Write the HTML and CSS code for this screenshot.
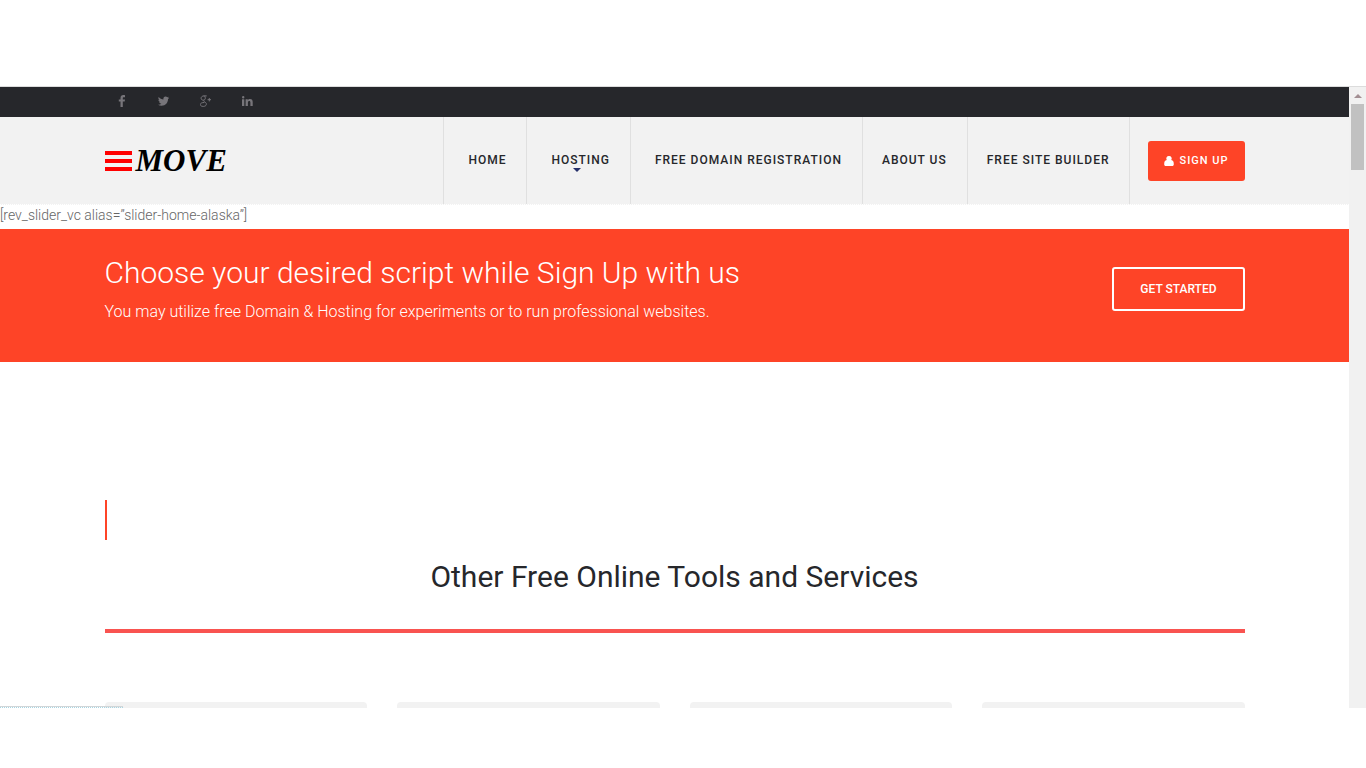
FILE: index.html
```
<!DOCTYPE html>
<html lang="en">
<head>
  <meta charset="UTF-8" />
  <meta name="viewport" content="width=device-width, initial-scale=1.0"/>
  <title>Move - Free Hosting</title>
  <link rel="stylesheet" href="styles.css">
</head>
<body>

<div class="window">
  <div class="page">
    <div class="topbar">
      <div class="container social">
        <a href="#" aria-label="Facebook"><svg width="12" height="12" viewBox="0 0 12 12"><path d="M9 .2v2H7.800c-.8 0-1 .4-1 1v1.200H9l-.3 2.100H6.800V12H4.500V6.500H2.800V4.400h1.700V2.900C4.500 1.100 5.600 0 7.300 0 8.100 0 8.800.1 9 .2z"/></svg></a>
        <a href="#" aria-label="Twitter"><svg width="12" height="12" viewBox="0 0 12 12"><path d="M11.200 2.700c-.3.500-.7.900-1.200 1.200v.3c0 3-2.300 6.500-6.500 6.500-1.300 0-2.500-.4-3.500-1 1.200.1 2.400-.2 3.400-1-1 0-1.900-.7-2.200-1.600h1C1.100 6.900.4 6 .4 4.800c.3.200.6.300 1 .3C.4 4.300.1 3 .7 2c1.200 1.400 2.800 2.300 4.700 2.400-.3-1.800.8-2.900 2.200-2.900.7 0 1.300.3 1.700.7.500-.1 1-.3 1.500-.5-.2.500-.5.900-1 1.300.5-.1.900-.2 1.400-.3z"/></svg></a>
        <a href="#" aria-label="Google Plus"><svg width="12" height="12" viewBox="0 0 12 12"><path class="line" d="M6.700.9H4C2.200.9 1.100 2 1.100 3.200s1 2 2.100 2c1.300 0 2.100-.9 2.100-2C5.300 2 4.700.9 3.800.9M3.800 5.300c-.6.800.4 1.200 1.200 1.800 1 .7 1.500 1.300 1.300 2.400-.2 1.200-1.400 1.900-3 1.900-1.700 0-3-.7-3-1.800 0-1.500 1.900-2.100 4-2.100M9.300 3v3.400M7.600 4.700H11"/></svg></a>
        <a href="#" aria-label="LinkedIn"><svg width="12" height="12" viewBox="0 0 12 12"><path d="M0 4.300h2.300V11H0zM1.200 1a1.200 1.200 0 1 1 0 2.400A1.200 1.200 0 0 1 1.200 1zM3.600 4.300h2.200v1c.4-.7 1.100-1.200 2.200-1.200 1.900 0 2.700 1.100 2.700 3V11H8.400V7.500C8.400 6.600 8.100 6 7.300 6s-1.400.6-1.400 1.500V11H3.600z"/></svg></a>
      </div>
    </div>

    <header class="header">
      <div class="container header-row">
        <a href="#" class="logo">
          <svg width="27" height="20" viewBox="0 0 27 20" aria-hidden="true"><path d="M0 0h27v4H0zM0 8h27v4H0zM0 16h27v4H0z"/></svg>
          <span>MOVE</span>
        </a>
        <nav class="menu">
          <a href="#">HOME</a>
          <a href="#" class="has-sub">HOSTING</a>
          <a href="#">FREE DOMAIN REGISTRATION</a>
          <a href="#" class="tight">ABOUT US</a>
          <a href="#" class="tight">FREE SITE BUILDER</a>
        </nav>
        <a href="#" class="signup">
          <svg width="10" height="10" viewBox="0 0 10 10" aria-hidden="true"><path d="M5 0a2.600 2.600 0 0 1 2.200 4.100C9.200 4.400 9.800 6 9.800 8.200 9.800 9.300 9.200 10 8.200 10H1.800C.8 10 .2 9.300.2 8.200.2 6 .8 4.400 2.800 4.100A2.600 2.600 0 0 1 5 0z"/></svg>
          <span>SIGN UP</span>
        </a>
      </div>
    </header>

    <p class="shortcode">[rev_slider_vc alias=”slider-home-alaska”]</p>

    <section class="promo">
      <div class="container promo-row">
        <div>
          <h2>Choose your desired script while Sign Up with us</h2>
          <p>You may utilize free Domain &amp; Hosting for experiments or to run professional websites.</p>
        </div>
        <a href="#" class="get-started">GET STARTED</a>
      </div>
    </section>

    <section class="tools container">
      <div class="marker"></div>
      <h2>Other Free Online Tools and Services</h2>
      <hr>
      <div class="cards">
        <div class="card"></div>
        <div class="card"></div>
        <div class="card"></div>
        <div class="card"></div>
      </div>
    </section>
  </div>

  <div class="scrollbar">
    <span class="arrow"></span>
    <span class="thumb"></span>
  </div>
  <div class="status"></div>
</div>

</body>
</html>
```
FILE: styles.css
```
* {
  box-sizing: border-box;
}

body {
  margin: 0;
  padding: 86px 0 60px;
  height: 100vh;
  background: #fff;
  color: #26272b;
  font-family: Roboto, sans-serif;
}

a {
  color: inherit;
  text-decoration: none;
}

svg {
  display: block;
  fill: currentColor;
}

h2, p {
  margin: 0;
}

/* browser window */
.window {
  position: relative;
  display: flex;
  height: 100%;
  overflow: hidden;
  border-top: 1px solid #dcdcdc;
}

.page {
  flex: 1;
  min-width: 0;
}

.container {
  width: 100%;
  max-width: 1140px;
  margin: 0 auto;
}

.topbar {
  background: #26272b;
  color: #77757a;
}

.social {
  display: flex;
  align-items: center;
  gap: 30px;
  height: 30px;
  padding: 0 11px 3px;
}

.social .line {
  fill: none;
  stroke: currentColor;
}

.header {
  background: #f2f2f2;
  border-bottom: 1px dotted #fff;
}

.header-row {
  display: flex;
  height: 87px;
}

.logo {
  display: flex;
  align-items: center;
  gap: 4px;
  margin-right: auto;
  color: #000;
  font: italic bold 31px "Liberation Serif", serif;
}

.logo svg {
  fill: #f00;
}

.menu {
  display: flex;
  border-right: 1px solid #e0e0e0;
  font-size: 12px;
  font-weight: 500;
  letter-spacing: 1px;
}

.menu a {
  position: relative;
  display: flex;
  align-items: center;
  padding: 0 20px 2px 24px;
  border-left: 1px solid #e0e0e0;
}

.menu a.tight {
  padding-left: 19px;
}

.has-sub::after {
  content: "";
  position: absolute;
  top: 51px;
  left: 50%;
  margin-left: -6px;
  border: 4px solid transparent;
  border-top-color: #26306b;
  border-bottom: 0;
}

.signup {
  display: flex;
  align-items: center;
  align-self: center;
  gap: 5px;
  height: 40px;
  margin-left: 18px;
  padding: 0 16px;
  border-radius: 3px;
  background: #fe4427;
  color: #fff;
  font-size: 11px;
  font-weight: 500;
  letter-spacing: 1px;
}

.shortcode {
  color: #666;
  font-size: 14px;
  font-weight: 300;
  line-height: 20px;
  padding-bottom: 4px;
}

.promo {
  background: #fe4427;
  color: #fff;
}

.promo-row {
  display: flex;
  justify-content: space-between;
  align-items: flex-start;
  padding: 24px 0 38px;
}

.promo h2 {
  font-size: 30px;
  font-weight: 300;
  line-height: 40px;
}

.promo p {
  padding-top: 6px;
  font-size: 16px;
  font-weight: 300;
  line-height: 25px;
}

.get-started {
  margin-top: 14px;
  padding: 0 26px;
  border: 2px solid #fff;
  border-radius: 3px;
  font-size: 12px;
  font-weight: 500;
  line-height: 40px;
}

.tools {
  padding-top: 138px;
}

.marker {
  height: 40px;
  border-left: 2px solid #fe4427;
}

.tools h2 {
  padding: 17px 0 32px;
  text-align: center;
  font-size: 30px;
  font-weight: 400;
  line-height: 40px;
}

.tools hr {
  height: 4px;
  margin: 0;
  border: 0;
  background: #f95350;
}

.cards {
  display: grid;
  grid-template-columns: repeat(4, 1fr);
  gap: 30px;
  padding-top: 69px;
}

.card {
  height: 300px;
  border-radius: 4px;
  background: #f2f2f2;
}

.scrollbar {
  display: flex;
  flex-direction: column;
  align-items: center;
  width: 17px;
  background: #f1f1f1;
}

.arrow {
  margin: 7px 0 6px;
  border: 4px solid transparent;
  border-top: 0;
  border-bottom-color: #a38f93;
}

.thumb {
  width: 13px;
  height: 66px;
  background: #c1c1c1;
}

/* link preview at the window's lower edge */
.status {
  position: absolute;
  left: 0;
  bottom: 0;
  width: 123px;
  height: 2px;
  border-top: 1px solid #d2d6d8;
  border-bottom: 1px dotted #a9d5e2;
}
```
